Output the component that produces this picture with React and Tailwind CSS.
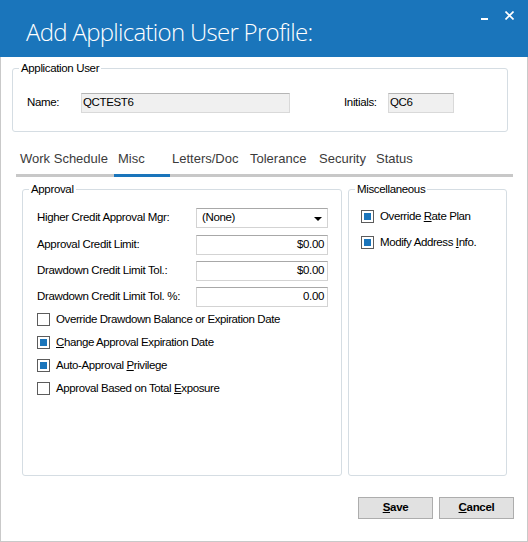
const font = { fontFamily: '"Liberation Sans", Arial, sans-serif' };
const txt = "text-[11.5px] tracking-[-0.35px]";

function Check({ checked, children }) {
  return (
    <div className="flex items-center h-[13px]">
      <span className="w-[13px] h-[13px] border border-[#5c5c5c] bg-white p-[2px] shrink-0">
        {checked && <span className="block w-full h-full bg-[#1a75bb]" />}
      </span>
      <span className="ml-[6px] text-[11.5px] tracking-[-0.4px] leading-[15px] text-black whitespace-nowrap">{children}</span>
    </div>
  );
}

function Field({ label, value, select }) {
  return (
    <div className="flex items-center h-[20px]">
      <span className="w-[159px] shrink-0 text-[11.5px] tracking-[-0.35px] text-black whitespace-nowrap">{label}</span>
      <div className="relative w-[132px] shrink-0 h-[20px] border border-[#d3d3d3] border-t-[#a8a8a8] bg-white flex items-center text-[11.5px] tracking-[-0.35px] text-black">
        {select ? (
          <>
            <span className="pl-[5px]">{value}</span>
            <span className="absolute right-[5px] top-[8px] w-0 h-0 border-l-[4px] border-r-[4px] border-t-[4px] border-l-transparent border-r-transparent border-t-black" />
          </>
        ) : (
          <span className="w-full text-right pr-[3px]">{value}</span>
        )}
      </div>
    </div>
  );
}

const tabs = [
  { name: "Work Schedule", cls: "w-[98px] pl-[4px]" },
  { name: "Misc", cls: "w-[56px] pl-[4px]", active: true },
  { name: "Letters/Doc", cls: "w-[78px] pl-[2px]" },
  { name: "Tolerance", cls: "w-[67px] pl-[2px]" },
  { name: "Security", cls: "w-[57px] pl-[4px]" },
  { name: "Status", cls: "w-[60px] pl-[4px]" },
];

export default function App() {
  return (
    <div className="w-[528px] h-[542px] flex flex-col bg-white" style={font}>
      {/* title bar */}
      <div className="relative h-[57px] bg-[#1a75bb] shrink-0">
        <div
          className="pl-[26px] pt-[16px] text-[24px] leading-[32px] font-light text-white tracking-[-0.7px] whitespace-nowrap"
          style={{ fontFamily: '"Open Sans", sans-serif' }}
        >
          Add Application User Profile:
        </div>
        <span className="absolute left-[481px] top-[18px] w-[7px] h-[2px] bg-white" />
        <svg className="absolute left-[505px] top-[11px]" width="9" height="9" viewBox="0 0 9 9">
          <path d="M0.5 0.5 L8.5 8.5 M8.5 0.5 L0.5 8.5" stroke="white" strokeWidth="1.6" />
        </svg>
      </div>

      {/* body */}
      <div className="flex-1 flex flex-col border-x border-b border-[#c9c9c9]">
        <fieldset className="ml-[11px] mt-[4px] w-[496px] h-[71px] border border-[#d5dde3] rounded-[3px]">
          <legend className={`ml-[6px] px-[2px] ${txt} leading-[15px] text-black`}>Application User</legend>
          <div className={`flex items-center mt-[17px] h-[20px] ${txt} text-black`}>
            <span className="ml-[14px] w-[54px]">Name:</span>
            <div className="w-[209px] h-[20px] bg-[#f0f0f0] border border-[#d9d9d9] border-t-[#b5b5b5] flex items-center pl-[1px]">
              QCTEST6
            </div>
            <span className="ml-[54px] w-[44px]">Initials:</span>
            <div className="w-[66px] h-[20px] bg-[#f0f0f0] border border-[#d9d9d9] border-t-[#b5b5b5] flex items-center pl-[1px]">
              QC6
            </div>
          </div>
        </fieldset>

        {/* tabs */}
        <div className="ml-[15px] mt-[18px] w-[497px] flex border-b-[3px] border-[#c8c8c8] text-[13px] leading-[18px] text-[#3b3b3b] whitespace-nowrap">
          {tabs.map((t) => (
            <div
              key={t.name}
              className={`${t.cls} shrink-0 pb-[6px] -mb-[3px] border-b-[3px] ${t.active ? "border-[#1a75bb]" : "border-transparent"}`}
            >
              {t.name}
            </div>
          ))}
        </div>

        {/* groups */}
        <div className="flex ml-[21px] mt-[5px] gap-[6px]">
          <fieldset className="w-[320px] h-[294px] border border-[#d5dde3] rounded-[3px]">
            <legend className={`ml-[6px] px-[2px] ${txt} leading-[15px] text-black`}>Approval</legend>
            <div className="pl-[14px] pt-[11px] flex flex-col">
              <Field label="Higher Credit Approval Mgr:" value="(None)" select />
              <div className="h-[7px]" />
              <Field label="Approval Credit Limit:" value="$0.00" />
              <div className="h-[6px]" />
              <Field label="Drawdown Credit Limit Tol.:" value="$0.00" />
              <div className="h-[6px]" />
              <Field label="Drawdown Credit Limit Tol. %:" value="0.00" />
              <div className="flex flex-col gap-[10px] mt-[6px]">
                <Check>Override Drawdown Balance or Expiration Date</Check>
                <Check checked>
                  <u>C</u>hange Approval Expiration Date
                </Check>
                <Check checked>
                  Auto-Approval <u>P</u>rivilege
                </Check>
                <Check>
                  Approval Based on Total <u>E</u>xposure
                </Check>
              </div>
            </div>
          </fieldset>

          <fieldset className="w-[159px] h-[294px] border border-[#d5dde3] rounded-[3px]">
            <legend className={`ml-[6px] px-[2px] ${txt} leading-[15px] text-black`}>Miscellaneous</legend>
            <div className="pl-[12px] pt-[13px] flex flex-col gap-[13px]">
              <Check checked>
                Override <u>R</u>ate Plan
              </Check>
              <Check checked>
                Modify Address <u>I</u>nfo.
              </Check>
            </div>
          </fieldset>
        </div>

        {/* buttons */}
        <div className="flex justify-end gap-[6px] mt-[21px] mr-[13px]">
          <button className="w-[75px] h-[22px] bg-[#e1e1e1] border border-[#adadad] text-[11.5px] tracking-[-0.3px] font-bold text-black">
            <u>S</u>ave
          </button>
          <button className="w-[75px] h-[22px] bg-[#e1e1e1] border border-[#adadad] text-[11.5px] tracking-[-0.3px] font-bold text-black">
            <u>C</u>ancel
          </button>
        </div>
      </div>
    </div>
  );
}
